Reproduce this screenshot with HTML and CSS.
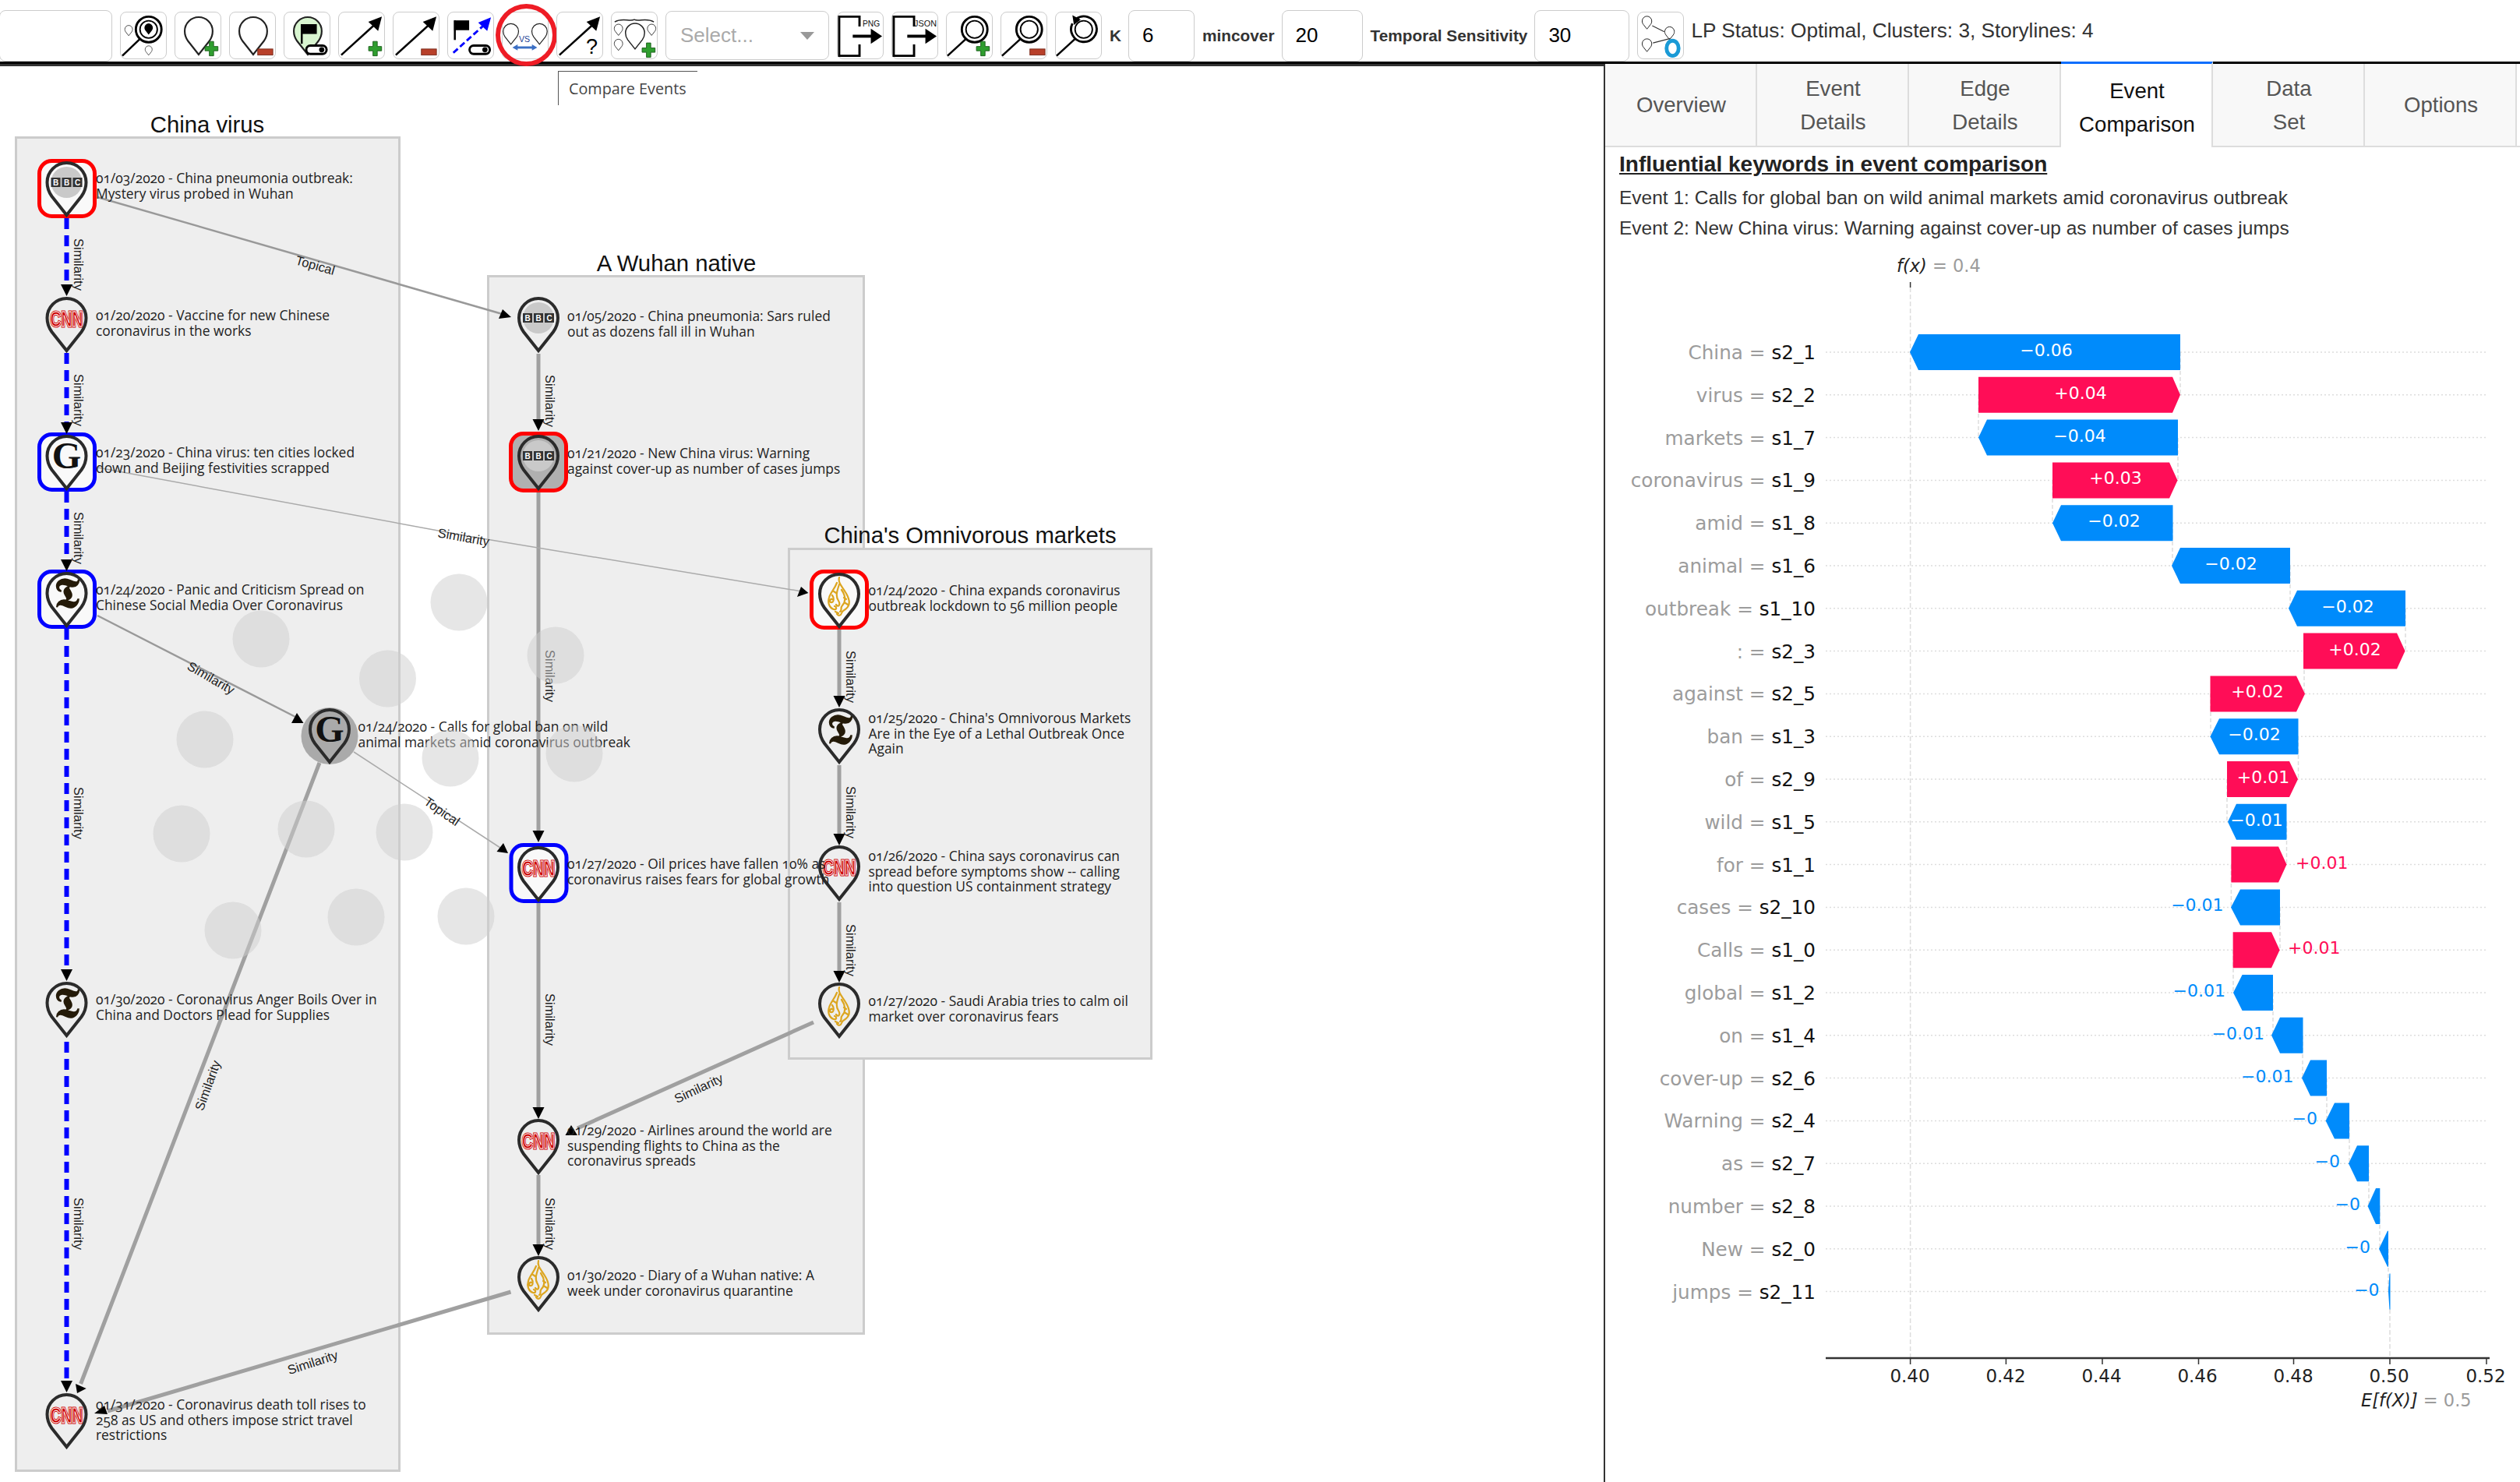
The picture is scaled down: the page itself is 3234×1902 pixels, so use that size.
FILE: index.html
```html
<!DOCTYPE html>
<html lang="en">
<head>
    <meta charset="UTF-8">
    <meta name="viewport" content="width=device-width, initial-scale=1.0">
    <title>Narrative Maps</title>
    <link rel="stylesheet" href="styles.css">
</head>
<body>
    <!-- shared shapes -->
    <svg class="defs">
        <symbol id="pin" viewBox="0 0 54 71" overflow="visible">
            <path d="M27 69 L8 45 C3 38 2 33 2 27 A25 25 0 0 1 52 27 C52 33 51 38 46 45 Z"/>
        </symbol>
        <symbol id="plus" viewBox="0 0 20 22" overflow="visible">
            <path d="M7 1H13V8H19V14H13V21H7V14H1V8H7Z" fill="#2f9e2f" stroke="#1a5c1a" stroke-width="1"/>
        </symbol>
        <symbol id="minus" viewBox="0 0 20 8" overflow="visible">
            <rect width="20" height="8" fill="#b8402a" stroke="#7a2a1a" stroke-width="1"/>
        </symbol>
        <symbol id="toggle" viewBox="0 0 30 14" overflow="visible">
            <rect x="1.5" y="1.5" width="27" height="11" rx="5.5" fill="#fff" stroke="#000" stroke-width="3"/>
            <circle cx="22" cy="7" r="3.5" fill="#000"/>
        </symbol>
        <polygon id="tip-down" points="-7.5,-15 7.5,-15 0,0"/>

        <symbol id="pin-bbc" viewBox="0 0 54 71" overflow="visible">
            <circle cx="27" cy="27" r="20" fill="#c9c9c9"/>
            <rect x="7" y="21" width="12" height="12" fill="#333"/>
            <rect x="21" y="21" width="12" height="12" fill="#333"/>
            <rect x="35" y="21" width="12" height="12" fill="#333"/>
            <text class="logo-bbc" x="13" y="31">B</text>
            <text class="logo-bbc" x="27" y="31">B</text>
            <text class="logo-bbc" x="41" y="31">C</text>
            <use href="#pin" width="54" height="71" class="pin-line"/>
        </symbol>
        <symbol id="pin-cnn" viewBox="0 0 54 71" overflow="visible">
            <text class="logo-cnn cnn-outer" x="27" y="38" textLength="42" lengthAdjust="spacingAndGlyphs">CNN</text>
            <text class="logo-cnn cnn-inner" x="27" y="38" textLength="42" lengthAdjust="spacingAndGlyphs">CNN</text>
            <use href="#pin" width="54" height="71" class="pin-line"/>
        </symbol>
        <symbol id="pin-g" viewBox="0 0 54 71" overflow="visible">
            <text class="logo-g" x="27" y="43">G</text>
            <use href="#pin" width="54" height="71" class="pin-line"/>
        </symbol>
        <symbol id="pin-nyt" viewBox="0 0 54 71" overflow="visible">
            <text class="logo-nyt" x="27" y="46">&#x1D57F;</text>
            <use href="#pin" width="54" height="71" class="pin-line"/>
        </symbol>
        <symbol id="pin-aj" viewBox="0 0 54 71" overflow="visible">
            <path class="logo-aj" d="M27 6C25 13 31 18 35 25C40 33 42 41 36 46C33 49 31 48 30 52C29 55 26 56 24 53M24 13C21 21 16 25 14 32C12 38 14 45 20 47C24 48 24 44 21 43M27 15C24 24 22 30 26 36C29 41 26 45 23 41M30 22C35 29 36 37 31 42C28 45 31 49 28 50M18 29C21 33 20 39 16 38C14 36 16 33 18 34M33 32L36 34M20 24L23 26M35 39L38 41M22 50L26 52"/>
            <use href="#pin" width="54" height="71" class="pin-line"/>
        </symbol>
    </svg>

    <div class="toolbar">
        <input class="field field-search" type="text">

        <button class="tool-btn" title="Search event">
            <svg viewBox="0 0 60 60">
                <line x1="2" y1="57" x2="25" y2="35" class="ink"/>
                <circle cx="37" cy="22" r="17" class="ring"/>
                <circle cx="37" cy="22" r="11.5" class="ring-thin"/>
                <use href="#pin" x="31" y="13" width="12" height="17" fill="#000"/>
                <use href="#pin" x="5" y="16" width="11" height="15" class="thin-pin"/>
                <use href="#pin" x="32" y="43" width="10" height="14" class="thin-pin"/>
            </svg>
        </button>
        <button class="tool-btn" title="Add event">
            <svg viewBox="0 0 60 60">
                <use href="#pin" x="11" y="4" width="40" height="53" class="tool-pin"/>
                <use href="#plus" x="38" y="37" width="20" height="21"/>
            </svg>
        </button>
        <button class="tool-btn" title="Remove event">
            <svg viewBox="0 0 60 60">
                <use href="#pin" x="11" y="4" width="40" height="53" class="tool-pin"/>
                <use href="#minus" x="37" y="48" width="20" height="8"/>
            </svg>
        </button>
        <button class="tool-btn" title="Pin event">
            <svg viewBox="0 0 60 60">
                <use href="#pin" x="11" y="4" width="40" height="53" class="tool-pin pin-green"/>
                <rect x="22" y="15" width="21" height="13"/>
                <line x1="23" y1="15" x2="23" y2="41" class="ink"/>
                <use href="#toggle" x="27" y="42" width="31" height="14"/>
            </svg>
        </button>
        <button class="tool-btn" title="Add edge">
            <svg viewBox="0 0 60 60">
                <line x1="3" y1="56" x2="47" y2="16" class="ink"/>
                <polygon points="57,5 52,24 39,12"/>
                <use href="#plus" x="38" y="37" width="20" height="21"/>
            </svg>
        </button>
        <button class="tool-btn" title="Remove edge">
            <svg viewBox="0 0 60 60">
                <line x1="3" y1="56" x2="47" y2="16" class="ink"/>
                <polygon points="57,5 52,24 39,12"/>
                <use href="#minus" x="37" y="48" width="20" height="8"/>
            </svg>
        </button>
        <button class="tool-btn" title="Pin edge">
            <svg viewBox="0 0 60 60">
                <line x1="7" y1="53" x2="48" y2="16" class="ink-blue"/>
                <polygon points="57,6 52,24 40,13" fill="#0000ff"/>
                <rect x="8" y="10" width="20" height="13"/>
                <line x1="9" y1="10" x2="9" y2="36" class="ink"/>
                <use href="#toggle" x="27" y="42" width="30" height="14"/>
            </svg>
        </button>
        <button class="tool-btn tool-btn-ring" title="Compare Events">
            <svg viewBox="0 0 60 60">
                <use href="#pin" x="0" y="13" width="22" height="30" class="tool-pin"/>
                <use href="#pin" x="38" y="13" width="22" height="30" class="tool-pin"/>
                <text class="vs-text" x="29" y="39">VS</text>
                <line x1="18" y1="46" x2="42" y2="46" class="double-arrow"/>
                <polygon points="13,46 20,42 20,50" fill="#3b6fc4"/>
                <polygon points="46,46 39,42 39,50" fill="#3b6fc4"/>
            </svg>
            <span class="ring-mark"></span>
        </button>
        <button class="tool-btn" title="Explain edge">
            <svg viewBox="0 0 60 60">
                <line x1="3" y1="56" x2="47" y2="16" class="ink"/>
                <polygon points="57,5 52,24 39,12"/>
                <text class="help-text" x="46" y="54">?</text>
            </svg>
        </button>
        <button class="tool-btn" title="Add cluster">
            <svg viewBox="0 0 60 60">
                <path d="M4 12C14 6 24 12 30 9C36 12 46 6 56 12" class="brace"/>
                <use href="#pin" x="17" y="13" width="28" height="36" class="tool-pin"/>
                <use href="#pin" x="3" y="14" width="12" height="17" class="thin-pin"/>
                <use href="#pin" x="47" y="14" width="12" height="17" class="thin-pin"/>
                <use href="#pin" x="3" y="34" width="12" height="17" class="thin-pin"/>
                <use href="#plus" x="39" y="39" width="20" height="21"/>
            </svg>
        </button>

        <div class="select-box">
            <span class="select-text">Select...</span>
            <span class="select-caret"></span>
        </div>

        <button class="tool-btn" title="Export PNG">
            <svg viewBox="0 0 60 60">
                <path d="M29 18V5H2V57H29V42" class="bracket"/>
                <line x1="20" y1="31" x2="46" y2="31" class="ink-heavy"/>
                <polygon points="59,31 44,21 44,41"/>
                <text class="export-text" x="33" y="18" textLength="23" lengthAdjust="spacingAndGlyphs">PNG</text>
            </svg>
        </button>
        <button class="tool-btn" title="Export JSON">
            <svg viewBox="0 0 60 60">
                <path d="M29 18V5H2V57H29V42" class="bracket"/>
                <line x1="20" y1="31" x2="46" y2="31" class="ink-heavy"/>
                <polygon points="59,31 44,21 44,41"/>
                <text class="export-text" x="29" y="18" textLength="30" lengthAdjust="spacingAndGlyphs">JSON</text>
            </svg>
        </button>
        <button class="tool-btn" title="Zoom in">
            <svg viewBox="0 0 60 60">
                <line x1="1" y1="57" x2="25" y2="35" class="ink"/>
                <circle cx="37" cy="22" r="17" class="ring"/>
                <circle cx="37" cy="22" r="11.5" class="ring-thin"/>
                <use href="#plus" x="38" y="37" width="20" height="21"/>
            </svg>
        </button>
        <button class="tool-btn" title="Zoom out">
            <svg viewBox="0 0 60 60">
                <line x1="1" y1="57" x2="25" y2="35" class="ink"/>
                <circle cx="37" cy="22" r="17" class="ring"/>
                <circle cx="37" cy="22" r="11.5" class="ring-thin"/>
                <use href="#minus" x="38" y="48" width="20" height="8"/>
            </svg>
        </button>
        <button class="tool-btn" title="Reset zoom">
            <svg viewBox="0 0 60 60">
                <line x1="1" y1="57" x2="25" y2="35" class="ink"/>
                <path d="M27 8A17 17 0 1 1 22 14" class="ring"/>
                <polygon points="22,3 33,9 24,16"/>
                <circle cx="37" cy="22" r="11.5" class="ring-thin"/>
            </svg>
        </button>

        <label class="field-label">K</label>
        <input class="field field-k" type="text" value="6">
        <label class="field-label">mincover</label>
        <input class="field field-mincover" type="text" value="20">
        <label class="field-label">Temporal Sensitivity</label>
        <input class="field field-temporal" type="text" value="30">

        <button class="tool-btn" title="Solve">
            <svg viewBox="0 0 60 60">
                <use href="#pin" x="5" y="4" width="14" height="18" class="thin-pin"/>
                <use href="#pin" x="35" y="18" width="14" height="18" class="thin-pin"/>
                <use href="#pin" x="5" y="34" width="14" height="18" class="thin-pin"/>
                <path d="M19 17L35 25M43 34L20 40" class="thin-line"/>
                <ellipse cx="46" cy="47" rx="8" ry="10" class="refresh"/>
            </svg>
        </button>
        <span class="lp-status">LP Status: Optimal, Clusters: 3, Storylines: 4</span>
    </div>

    <div class="tooltip">Compare Events</div>

    <div class="main">
        <div class="graph-panel">
            <svg class="graph" viewBox="0 85 2058 1817">
                <!-- storylines -->
                <rect class="story-box" x="20.5" y="176.5" width="492" height="1711"/>
                <text class="story-title" x="266" y="170">China virus</text>
                <rect class="story-box" x="626.5" y="354.5" width="482" height="1357"/>
                <text class="story-title" x="868" y="348">A Wuhan native</text>
                <rect class="story-box" x="1012.5" y="704.5" width="465" height="654"/>
                <text class="story-title" x="1245" y="697">China's Omnivorous markets</text>

                <!-- selection frames -->
                <rect class="frame frame-red" x="50.5" y="206.5" width="71" height="71"/>
                <rect class="frame frame-blue" x="50.5" y="557.5" width="71" height="71"/>
                <rect class="frame frame-blue" x="50.5" y="733.5" width="71" height="71"/>
                <rect class="frame frame-red frame-gray" x="655.5" y="556.5" width="71" height="73"/>
                <rect class="frame frame-blue" x="656" y="1084.5" width="71" height="72"/>
                <rect class="frame frame-red" x="1041.5" y="733.5" width="71" height="72"/>

                <!-- edges -->
                <path class="edge-blue" d="M85.5 280V372M85.5 453V549M85.5 631V725M85.5 807V1251M85.5 1337V1779"/>
                <path class="edge-gray" d="M691 454V545M691 632V1073M691 1159V1428M691 1508V1604M1077 808V900M1077 982V1077M1077 1158V1253"/>
                <path class="edge-gray" d="M410 979L103.6 1776M655.5 1658L138 1811M1044 1312L741 1448"/>
                <path class="edge-mid" d="M125 253L648 404M125 790L381 921"/>
                <path class="edge-thin" d="M125 600L600 688L1029 759M454 965L642 1088"/>

                <use href="#tip-down" x="85.5" y="380"/>
                <use href="#tip-down" x="85.5" y="557"/>
                <use href="#tip-down" x="85.5" y="733"/>
                <use href="#tip-down" x="85.5" y="1259"/>
                <use href="#tip-down" x="85.5" y="1787"/>
                <use href="#tip-down" x="691" y="553"/>
                <use href="#tip-down" x="691" y="1081"/>
                <use href="#tip-down" x="691" y="1436"/>
                <use href="#tip-down" x="691" y="1612"/>
                <use href="#tip-down" x="1077" y="908"/>
                <use href="#tip-down" x="1077" y="1085"/>
                <use href="#tip-down" x="1077" y="1261"/>
                <polygon points="645,397 656,407 640,409"/>
                <polygon points="1028,753 1037.4,761 1023,766"/>
                <polygon points="381,915 389.5,928 374,928"/>
                <polygon points="646,1082 652,1095 637.5,1093"/>
                <polygon points="733,1444 741,1457 725.5,1457"/>
                <polygon points="97,1776 110.7,1782 99,1788"/>
                <polygon points="134,1804 138,1815 121,1814"/>

                <!-- edge labels -->
                <text class="edge-label" transform="translate(94.5 306) rotate(90)">Similarity</text>
                <text class="edge-label" transform="translate(94.5 480) rotate(90)">Similarity</text>
                <text class="edge-label" transform="translate(94.5 657) rotate(90)">Similarity</text>
                <text class="edge-label" transform="translate(94.5 1010) rotate(90)">Similarity</text>
                <text class="edge-label" transform="translate(94.5 1537) rotate(90)">Similarity</text>
                <text class="edge-label" transform="translate(700 481) rotate(90)">Similarity</text>
                <text class="edge-label" transform="translate(700 834) rotate(90)">Similarity</text>
                <text class="edge-label" transform="translate(700 1275) rotate(90)">Similarity</text>
                <text class="edge-label" transform="translate(700 1537) rotate(90)">Similarity</text>
                <text class="edge-label" transform="translate(1086 835) rotate(90)">Similarity</text>
                <text class="edge-label" transform="translate(1086 1009) rotate(90)">Similarity</text>
                <text class="edge-label" transform="translate(1086 1186) rotate(90)">Similarity</text>
                <text class="edge-label edge-mid-label" transform="translate(403 346) rotate(16)">Topical</text>
                <text class="edge-label edge-mid-label" transform="translate(594 695) rotate(10)">Similarity</text>
                <text class="edge-label edge-mid-label" transform="translate(268 875) rotate(30)">Similarity</text>
                <text class="edge-label edge-mid-label" transform="translate(564 1046) rotate(35)">Topical</text>
                <text class="edge-label edge-mid-label" transform="translate(272 1395) rotate(-70)">Similarity</text>
                <text class="edge-label edge-mid-label" transform="translate(403 1754) rotate(-18)">Similarity</text>
                <text class="edge-label edge-mid-label" transform="translate(899 1402) rotate(-25)">Similarity</text>

                <!-- events -->
                <use href="#pin-bbc" x="58.5" y="207" width="54" height="71"/>
                <use href="#pin-cnn" x="58.5" y="381" width="54" height="71"/>
                <use href="#pin-g" x="58.5" y="558" width="54" height="71"/>
                <use href="#pin-nyt" x="58.5" y="734" width="54" height="71"/>
                <use href="#pin-nyt" x="58.5" y="1260" width="54" height="71"/>
                <use href="#pin-cnn" x="58.5" y="1788" width="54" height="71"/>
                <use href="#pin-bbc" x="664" y="381" width="54" height="71"/>
                <use href="#pin-bbc" x="664" y="558" width="54" height="71"/>
                <use href="#pin-cnn" x="664" y="1086" width="54" height="71"/>
                <use href="#pin-cnn" x="664" y="1436" width="54" height="71"/>
                <use href="#pin-aj" x="664" y="1612" width="54" height="71"/>
                <use href="#pin-aj" x="1050" y="735" width="54" height="71"/>
                <use href="#pin-nyt" x="1050" y="909" width="54" height="71"/>
                <use href="#pin-cnn" x="1050" y="1085" width="54" height="71"/>
                <use href="#pin-aj" x="1050" y="1261" width="54" height="71"/>

                <text class="event-text" y="235"><tspan x="123">01/03/2020 - China pneumonia outbreak:</tspan><tspan x="123" dy="19.6">Mystery virus probed in Wuhan</tspan></text>
                <text class="event-text" y="411"><tspan x="123">01/20/2020 - Vaccine for new Chinese</tspan><tspan x="123" dy="19.6">coronavirus in the works</tspan></text>
                <text class="event-text" y="587"><tspan x="123">01/23/2020 - China virus: ten cities locked</tspan><tspan x="123" dy="19.6">down and Beijing festivities scrapped</tspan></text>
                <text class="event-text" y="763"><tspan x="123">01/24/2020 - Panic and Criticism Spread on</tspan><tspan x="123" dy="19.6">Chinese Social Media Over Coronavirus</tspan></text>
                <text class="event-text" y="1289"><tspan x="123">01/30/2020 - Coronavirus Anger Boils Over in</tspan><tspan x="123" dy="19.6">China and Doctors Plead for Supplies</tspan></text>
                <text class="event-text" y="1809"><tspan x="123">01/31/2020 - Coronavirus death toll rises to</tspan><tspan x="123" dy="19.6">258 as US and others impose strict travel</tspan><tspan x="123" dy="19.6">restrictions</tspan></text>
                <text class="event-text" y="412"><tspan x="728">01/05/2020 - China pneumonia: Sars ruled</tspan><tspan x="728" dy="19.6">out as dozens fall ill in Wuhan</tspan></text>
                <text class="event-text" y="588"><tspan x="728">01/21/2020 - New China virus: Warning</tspan><tspan x="728" dy="19.6">against cover-up as number of cases jumps</tspan></text>
                <text class="event-text" y="1115"><tspan x="728">01/27/2020 - Oil prices have fallen 10% as</tspan><tspan x="728" dy="19.6">coronavirus raises fears for global growth</tspan></text>
                <text class="event-text" y="1457"><tspan x="728">01/29/2020 - Airlines around the world are</tspan><tspan x="728" dy="19.6">suspending flights to China as the</tspan><tspan x="728" dy="19.6">coronavirus spreads</tspan></text>
                <text class="event-text" y="1643"><tspan x="728">01/30/2020 - Diary of a Wuhan native: A</tspan><tspan x="728" dy="19.6">week under coronavirus quarantine</tspan></text>
                <text class="event-text" y="764"><tspan x="1114.5">01/24/2020 - China expands coronavirus</tspan><tspan x="1114.5" dy="19.6">outbreak lockdown to 56 million people</tspan></text>
                <text class="event-text" y="928"><tspan x="1114.5">01/25/2020 - China's Omnivorous Markets</tspan><tspan x="1114.5" dy="19.6">Are in the Eye of a Lethal Outbreak Once</tspan><tspan x="1114.5" dy="19.6">Again</tspan></text>
                <text class="event-text" y="1105"><tspan x="1114.5">01/26/2020 - China says coronavirus can</tspan><tspan x="1114.5" dy="19.6">spread before symptoms show -- calling</tspan><tspan x="1114.5" dy="19.6">into question US containment strategy</tspan></text>
                <text class="event-text" y="1291"><tspan x="1114.5">01/27/2020 - Saudi Arabia tries to calm oil</tspan><tspan x="1114.5" dy="19.6">market over coronavirus fears</tspan></text>
                <text class="event-text" y="939"><tspan x="459.5">01/24/2020 - Calls for global ban on wild</tspan><tspan x="459.5" dy="19.6">animal markets amid coronavirus outbreak</tspan></text>

                <!-- neighbourhood of the focused event -->
                <g class="halo">
                    <ellipse cx="335" cy="820" rx="36.5" ry="36.5"/>
                    <ellipse cx="497.5" cy="871" rx="36.5" ry="36.5"/>
                    <ellipse cx="589" cy="773" rx="36.5" ry="36.5"/>
                    <ellipse cx="713" cy="841" rx="36.5" ry="36.5"/>
                    <ellipse cx="263" cy="949" rx="36.5" ry="36.5"/>
                    <ellipse cx="578" cy="973" rx="36.5" ry="36.5"/>
                    <ellipse cx="737" cy="967" rx="36.5" ry="36.5"/>
                    <ellipse cx="233" cy="1070" rx="36.5" ry="36.5"/>
                    <ellipse cx="393" cy="1064" rx="36.5" ry="36.5"/>
                    <ellipse cx="519" cy="1068" rx="36.5" ry="36.5"/>
                    <ellipse cx="299" cy="1194" rx="36.5" ry="36.5"/>
                    <ellipse cx="457" cy="1177" rx="36.5" ry="36.5"/>
                    <ellipse cx="598" cy="1176" rx="36.5" ry="36.5"/>
                </g>
                <circle class="focus-disc" cx="423" cy="944.5" r="36.5"/>
                <use href="#pin-g" x="396" y="909" width="54" height="71"/>
            </svg>
        </div>

        <div class="side-panel">
            <div class="tabs">
                <div class="tab">Overview</div>
                <div class="tab">Event<br>Details</div>
                <div class="tab">Edge<br>Details</div>
                <div class="tab tab-active">Event<br>Comparison</div>
                <div class="tab">Data<br>Set</div>
                <div class="tab">Options</div>
            </div>
            <div class="compare-text">
                <h3>Influential keywords in event comparison</h3>
                <p>Event 1: Calls for global ban on wild animal markets amid coronavirus outbreak</p>
                <p>Event 2: New China virus: Warning against cover-up as number of cases jumps</p>
            </div>

            <svg class="waterfall" viewBox="2060 320 1174 1582">
                <line class="base-line" x1="2451.6" y1="369" x2="2451.6" y2="1743"/>
                <line class="base-line" x1="3067" y1="1680" x2="3067" y2="1743"/>
                <line class="fx-tick" x1="2451.6" y1="362" x2="2451.6" y2="369"/>
                <text class="fx-text" x="2434" y="349"><tspan class="math">f(x)</tspan><tspan class="gray"> = 0.4</tspan></text>

                <path class="conn" d="M2798 452V507M2539 507V562M2795 562V616M2634 616V671M2788 671V726M2939 726V781M3087 781V836M2957 836V890M2837 890V945M2949.5 945V1000M2858 1000V1055M2934.5 1055V1110M2863.4 1110V1164M2926 1164V1219M2866 1219V1274M2917 1274V1329M2955 1329V1384M2986 1384V1438M3015 1438V1493M3040 1493V1548M3054 1548V1603M3065 1603V1658"/>

                <g transform="translate(0 452)">
                    <line class="row-line" x1="2343" x2="3192"/>
                    <polygon class="neg" points="2451,0 2462,-23 2798,-23 2798,23 2462,23"/>
                    <text class="val val-in" x="2626" y="5">−0.06</text>
                    <text class="feat" x="2330" y="9"><tspan class="gray">China = </tspan>s2_1</text>
                </g>
                <g transform="translate(0 506.8)">
                    <line class="row-line" x1="2343" x2="3192"/>
                    <polygon class="pos" points="2539,-23 2788,-23 2798,0 2788,23 2539,23"/>
                    <text class="val val-in" x="2670" y="5">+0.04</text>
                    <text class="feat" x="2330" y="9"><tspan class="gray">virus = </tspan>s2_2</text>
                </g>
                <g transform="translate(0 561.6)">
                    <line class="row-line" x1="2343" x2="3192"/>
                    <polygon class="neg" points="2539,0 2550,-23 2795,-23 2795,23 2550,23"/>
                    <text class="val val-in" x="2669" y="5">−0.04</text>
                    <text class="feat" x="2330" y="9"><tspan class="gray">markets = </tspan>s1_7</text>
                </g>
                <g transform="translate(0 616.4)">
                    <line class="row-line" x1="2343" x2="3192"/>
                    <polygon class="pos" points="2634,-23 2784,-23 2794.5,0 2784,23 2634,23"/>
                    <text class="val val-in" x="2715" y="5">+0.03</text>
                    <text class="feat" x="2330" y="9"><tspan class="gray">coronavirus = </tspan>s1_9</text>
                </g>
                <g transform="translate(0 671.2)">
                    <line class="row-line" x1="2343" x2="3192"/>
                    <polygon class="neg" points="2634,0 2645,-23 2788.5,-23 2788.5,23 2645,23"/>
                    <text class="val val-in" x="2713" y="5">−0.02</text>
                    <text class="feat" x="2330" y="9"><tspan class="gray">amid = </tspan>s1_8</text>
                </g>
                <g transform="translate(0 726)">
                    <line class="row-line" x1="2343" x2="3192"/>
                    <polygon class="neg" points="2787,0 2798,-23 2939,-23 2939,23 2798,23"/>
                    <text class="val val-in" x="2863" y="5">−0.02</text>
                    <text class="feat" x="2330" y="9"><tspan class="gray">animal = </tspan>s1_6</text>
                </g>
                <g transform="translate(0 780.8)">
                    <line class="row-line" x1="2343" x2="3192"/>
                    <polygon class="neg" points="2937,0 2948,-23 3087,-23 3087,23 2948,23"/>
                    <text class="val val-in" x="3013" y="5">−0.02</text>
                    <text class="feat" x="2330" y="9"><tspan class="gray">outbreak = </tspan>s1_10</text>
                </g>
                <g transform="translate(0 835.6)">
                    <line class="row-line" x1="2343" x2="3192"/>
                    <polygon class="pos" points="2956,-23 3076,-23 3086.5,0 3076,23 2956,23"/>
                    <text class="val val-in" x="3022" y="5">+0.02</text>
                    <text class="feat" x="2330" y="9"><tspan class="gray">: = </tspan>s2_3</text>
                </g>
                <g transform="translate(0 890.4)">
                    <line class="row-line" x1="2343" x2="3192"/>
                    <polygon class="pos" points="2836.5,-23 2947,-23 2958,0 2947,23 2836.5,23"/>
                    <text class="val val-in" x="2897" y="5">+0.02</text>
                    <text class="feat" x="2330" y="9"><tspan class="gray">against = </tspan>s2_5</text>
                </g>
                <g transform="translate(0 945.2)">
                    <line class="row-line" x1="2343" x2="3192"/>
                    <polygon class="neg" points="2836.5,0 2848,-23 2949.5,-23 2949.5,23 2848,23"/>
                    <text class="val val-in" x="2893" y="5">−0.02</text>
                    <text class="feat" x="2330" y="9"><tspan class="gray">ban = </tspan>s1_3</text>
                </g>
                <g transform="translate(0 1000)">
                    <line class="row-line" x1="2343" x2="3192"/>
                    <polygon class="pos" points="2858,-23 2938,-23 2949,0 2938,23 2858,23"/>
                    <text class="val val-in" x="2904.5" y="5">+0.01</text>
                    <text class="feat" x="2330" y="9"><tspan class="gray">of = </tspan>s2_9</text>
                </g>
                <g transform="translate(0 1054.8)">
                    <line class="row-line" x1="2343" x2="3192"/>
                    <polygon class="neg" points="2859,0 2870,-23 2934.5,-23 2934.5,23 2870,23"/>
                    <text class="val val-in" x="2896" y="5">−0.01</text>
                    <text class="feat" x="2330" y="9"><tspan class="gray">wild = </tspan>s1_5</text>
                </g>
                <g transform="translate(0 1109.6)">
                    <line class="row-line" x1="2343" x2="3192"/>
                    <polygon class="pos" points="2863.4,-23 2924,-23 2934.5,0 2924,23 2863.4,23"/>
                    <text class="val val-pos" x="2946" y="5">+0.01</text>
                    <text class="feat" x="2330" y="9"><tspan class="gray">for = </tspan>s1_1</text>
                </g>
                <g transform="translate(0 1164.4)">
                    <line class="row-line" x1="2343" x2="3192"/>
                    <polygon class="neg" points="2863,0 2875,-23 2926,-23 2926,23 2875,23"/>
                    <text class="val val-neg" x="2853.6" y="5">−0.01</text>
                    <text class="feat" x="2330" y="9"><tspan class="gray">cases = </tspan>s2_10</text>
                </g>
                <g transform="translate(0 1219.2)">
                    <line class="row-line" x1="2343" x2="3192"/>
                    <polygon class="pos" points="2865.6,-23 2915,-23 2925.6,0 2915,23 2865.6,23"/>
                    <text class="val val-pos" x="2936" y="5">+0.01</text>
                    <text class="feat" x="2330" y="9"><tspan class="gray">Calls = </tspan>s1_0</text>
                </g>
                <g transform="translate(0 1274)">
                    <line class="row-line" x1="2343" x2="3192"/>
                    <polygon class="neg" points="2866,0 2877.6,-23 2917,-23 2917,23 2877.6,23"/>
                    <text class="val val-neg" x="2856" y="5">−0.01</text>
                    <text class="feat" x="2330" y="9"><tspan class="gray">global = </tspan>s1_2</text>
                </g>
                <g transform="translate(0 1328.8)">
                    <line class="row-line" x1="2343" x2="3192"/>
                    <polygon class="neg" points="2915,0 2926,-23 2955.5,-23 2955.5,23 2926,23"/>
                    <text class="val val-neg" x="2906" y="5">−0.01</text>
                    <text class="feat" x="2330" y="9"><tspan class="gray">on = </tspan>s1_4</text>
                </g>
                <g transform="translate(0 1383.6)">
                    <line class="row-line" x1="2343" x2="3192"/>
                    <polygon class="neg" points="2954,0 2965,-23 2986,-23 2986,23 2965,23"/>
                    <text class="val val-neg" x="2943.5" y="5">−0.01</text>
                    <text class="feat" x="2330" y="9"><tspan class="gray">cover-up = </tspan>s2_6</text>
                </g>
                <g transform="translate(0 1438.4)">
                    <line class="row-line" x1="2343" x2="3192"/>
                    <polygon class="neg" points="2984.7,0 2996,-23 3015,-23 3015,23 2996,23"/>
                    <text class="val val-neg" x="2974" y="5">−0</text>
                    <text class="feat" x="2330" y="9"><tspan class="gray">Warning = </tspan>s2_4</text>
                </g>
                <g transform="translate(0 1493.2)">
                    <line class="row-line" x1="2343" x2="3192"/>
                    <polygon class="neg" points="3014,0 3025,-23 3040,-23 3040,23 3025,23"/>
                    <text class="val val-neg" x="3003" y="5">−0</text>
                    <text class="feat" x="2330" y="9"><tspan class="gray">as = </tspan>s2_7</text>
                </g>
                <g transform="translate(0 1548)">
                    <line class="row-line" x1="2343" x2="3192"/>
                    <polygon class="neg" points="3038.6,0 3049,-23 3054.3,-23 3054.3,23 3049,23"/>
                    <text class="val val-neg" x="3029" y="5">−0</text>
                    <text class="feat" x="2330" y="9"><tspan class="gray">number = </tspan>s2_8</text>
                </g>
                <g transform="translate(0 1602.8)">
                    <line class="row-line" x1="2343" x2="3192"/>
                    <polygon class="neg" points="3053,0 3064,-23 3065,-23 3065,23 3064,23"/>
                    <text class="val val-neg" x="3042" y="5">−0</text>
                    <text class="feat" x="2330" y="9"><tspan class="gray">New = </tspan>s2_0</text>
                </g>
                <g transform="translate(0 1657.6)">
                    <line class="row-line" x1="2343" x2="3192"/>
                    <polygon class="neg" points="3065,0 3066.5,-23 3067.5,-23 3067.5,23 3066.5,23"/>
                    <text class="val val-neg" x="3053.6" y="5">−0</text>
                    <text class="feat" x="2330" y="9"><tspan class="gray">jumps = </tspan>s2_11</text>
                </g>

                <line class="axis" x1="2343" y1="1743" x2="3195" y2="1743"/>
                <path class="axis-tick" d="M2451.6 1743V1751M2574.4 1743V1751M2698 1743V1751M2821.5 1743V1751M2943.5 1743V1751M3067 1743V1751M3191 1743V1751"/>
                <text class="tick" x="2451" y="1774">0.40</text>
                <text class="tick" x="2574" y="1774">0.42</text>
                <text class="tick" x="2697" y="1774">0.44</text>
                <text class="tick" x="2820" y="1774">0.46</text>
                <text class="tick" x="2943" y="1774">0.48</text>
                <text class="tick" x="3066" y="1774">0.50</text>
                <text class="tick" x="3190" y="1774">0.52</text>
                <text class="fx-text" x="3030" y="1805"><tspan class="math">E[f(X)]</tspan><tspan class="gray"> = 0.5</tspan></text>
            </svg>
        </div>
    </div>
</body>
</html>
```

FILE: styles.css
```css
html, body { margin: 0; padding: 0; height: 100%; overflow: hidden; background: white; }
body { font-family: "Liberation Sans", Arial, sans-serif; color: #333; position: relative; }
.defs { display: none; }

/* toolbar */
.toolbar { display: flex; align-items: center; gap: 10px; height: 79px; padding-top: 12px; box-sizing: border-box; white-space: nowrap; }
.field { box-sizing: border-box; height: 66px; border: 1px solid #ccc; border-radius: 8px; padding: 0 17px; font: 26px "Liberation Sans", Arial, sans-serif; color: #000; background: white; }
.field-search { width: 145px; margin-left: -1px; }
.field-k { width: 85px; }
.field-mincover { width: 104px; }
.field-temporal { width: 122px; }
.field-label { font-size: 20.8px; font-weight: bold; color: #333; margin-right: -1px; }
.tool-btn { position: relative; flex: none; width: 60px; height: 61px; padding: 0; border: 1px solid #ccc; border-radius: 8px; background: white; }
.tool-btn svg { display: block; width: 58px; height: 59px; overflow: visible; }
.ring-mark { position: absolute; left: -9px; top: -11px; width: 79px; height: 80px; box-sizing: border-box; border: 6px solid #ee1c25; border-radius: 50%; }
.select-box { box-sizing: border-box; display: flex; align-items: center; justify-content: space-between; width: 210px; height: 63px; padding: 0 18px; border: 1px solid #ccc; border-radius: 8px; }
.select-text { font-size: 26px; color: #aaa; }
.select-caret { width: 0; height: 0; border-left: 9px solid transparent; border-right: 9px solid transparent; border-top: 10px solid #999; }
.lp-status { font-size: 26.2px; color: #333; margin: 0 0 12px -1px; }

/* toolbar icon strokes */
.ink { stroke: #000; stroke-width: 2.6; }
.ink-heavy { stroke: #000; stroke-width: 4; }
.ink-blue { stroke: #0000ff; stroke-width: 3; stroke-dasharray: 8 4; }
.ring { fill: none; stroke: #000; stroke-width: 3; }
.ring-thin { fill: none; stroke: #000; stroke-width: 2; }
.tool-pin { fill: none; stroke: #222; stroke-width: 3; }
.thin-pin { fill: white; stroke: #222; stroke-width: 4; }
.pin-green { fill: #d8f5d0; }
.thin-line { fill: none; stroke: #333; stroke-width: 1.2; }
.brace { fill: none; stroke: #222; stroke-width: 1.5; }
.bracket { fill: none; stroke: #000; stroke-width: 3; }
.double-arrow { stroke: #3b6fc4; stroke-width: 3; }
.refresh { fill: none; stroke: #1a9ad6; stroke-width: 5; }
.vs-text { font-size: 11px; fill: #1c3f94; text-anchor: middle; }
.help-text { font-size: 28px; fill: #000; text-anchor: middle; }
.export-text { font-size: 12px; fill: #111; }

.tooltip { position: absolute; left: 716px; top: 91px; width: 179px; height: 44px; box-sizing: border-box; padding: 0 0 0 13px; border-top: 1px solid #555; border-left: 1px solid #555; font: 19.8px/44px "Open Sans", sans-serif; color: #444; white-space: nowrap; }

/* main area */
.main { display: flex; height: 1823px; border-top: 3px solid #000; }
.graph-panel { box-sizing: border-box; width: 2060px; height: 1820px; border-top: 3px solid #333; border-right: 2px solid #333; }
.graph { display: block; width: 2058px; height: 1817px; }
.story-box { fill: #eee; stroke: #ccc; stroke-width: 3; }
.story-title { font-size: 29.3px; fill: #111; text-anchor: middle; }
.frame { rx: 16px; stroke-width: 5; fill: #f9f9f9; }
.frame-red { stroke: #ff0000; }
.frame-blue { stroke: #0000ff; }
.frame-gray { fill: #b0b0b0; }
.edge-blue { fill: none; stroke: #0000ff; stroke-width: 6; stroke-dasharray: 14 8; }
.edge-gray { fill: none; stroke: #a0a0a0; stroke-width: 5; }
.edge-mid { fill: none; stroke: #999; stroke-width: 2.5; }
.edge-thin { fill: none; stroke: #aaa; stroke-width: 1.5; }
.edge-label { font-size: 16.5px; fill: #222; }
.edge-mid-label { text-anchor: middle; }
.event-text { font: 17.4px "Open Sans", sans-serif; fill: #222; font-variant-numeric: oldstyle-nums; }
.halo ellipse { fill: rgba(205, 205, 205, 0.5); }
.focus-disc { fill: #aaa; }

.pin-line { fill: none; stroke: #2b2b2b; stroke-width: 4; }
.logo-bbc { font-size: 10px; font-weight: bold; fill: white; text-anchor: middle; }
.logo-cnn { font-size: 27px; font-weight: bold; text-anchor: middle; }
.cnn-outer { fill: #cc0000; stroke: #cc0000; stroke-width: 3; }
.cnn-inner { fill: #cc0000; stroke: white; stroke-width: 1; }
.logo-g { font: bold 48px "Liberation Serif", serif; fill: #111; text-anchor: middle; }
.logo-nyt { font: bold 54px "DejaVu Serif", "Liberation Serif", serif; fill: #241a08; text-anchor: middle; }
.logo-aj { fill: none; stroke: #dca520; stroke-width: 2.2; stroke-linecap: round; }

/* right side */
.side-panel { display: flex; flex-direction: column; flex: 1; height: 1820px; }
.tabs { display: flex; flex: none; height: 107px; box-sizing: border-box; border-bottom: 2px solid #ddd; }
.tab { box-sizing: border-box; width: 195px; height: 105px; padding-left: 2px; display: flex; align-items: center; justify-content: center; text-align: center; background: #f8f8f8; border-right: 2px solid #ddd; font-size: 27.6px; line-height: 43px; color: #555; }
.tab-active { padding-top: 4px; background: white; color: #111; border-top: 3px solid #0d6efd; margin-top: -3px; height: 110px; }
.compare-text { padding: 6px 0 0 18px; }
.compare-text h3 { margin: 0 0 13px; font-size: 28px; font-weight: bold; text-decoration: underline; color: #222; line-height: 32px; }
.compare-text p { margin: 0 0 11px; font-size: 24.5px; line-height: 28px; color: #333; }
.waterfall { display: block; flex: none; width: 1174px; height: 1582px; margin-top: auto; font-family: "DejaVu Sans", sans-serif; }
.base-line { stroke: #ddd; stroke-width: 1.5; stroke-dasharray: 6 3; }
.fx-tick { stroke: #333; stroke-width: 1.5; }
.conn { fill: none; stroke: #ddd; stroke-width: 1.5; stroke-dasharray: 5 3; }
.row-line { stroke: #ddd; stroke-width: 1.5; stroke-dasharray: 2 3; }
.neg { fill: #008bfb; }
.pos { fill: #ff0d57; }
.val { font-size: 22px; }
.val-in { fill: white; text-anchor: middle; }
.val-pos { fill: #ff0d57; }
.val-neg { fill: #008bfb; text-anchor: end; }
.feat { font-size: 24.7px; fill: #111; text-anchor: end; }
.gray { fill: #9c9c9c; }
.math { font-style: italic; fill: #222; }
.fx-text { font-size: 22.5px; }
.axis { stroke: #333; stroke-width: 2.5; }
.axis-tick { fill: none; stroke: #333; stroke-width: 1.5; }
.tick { font-size: 23px; fill: #222; text-anchor: middle; }
```
